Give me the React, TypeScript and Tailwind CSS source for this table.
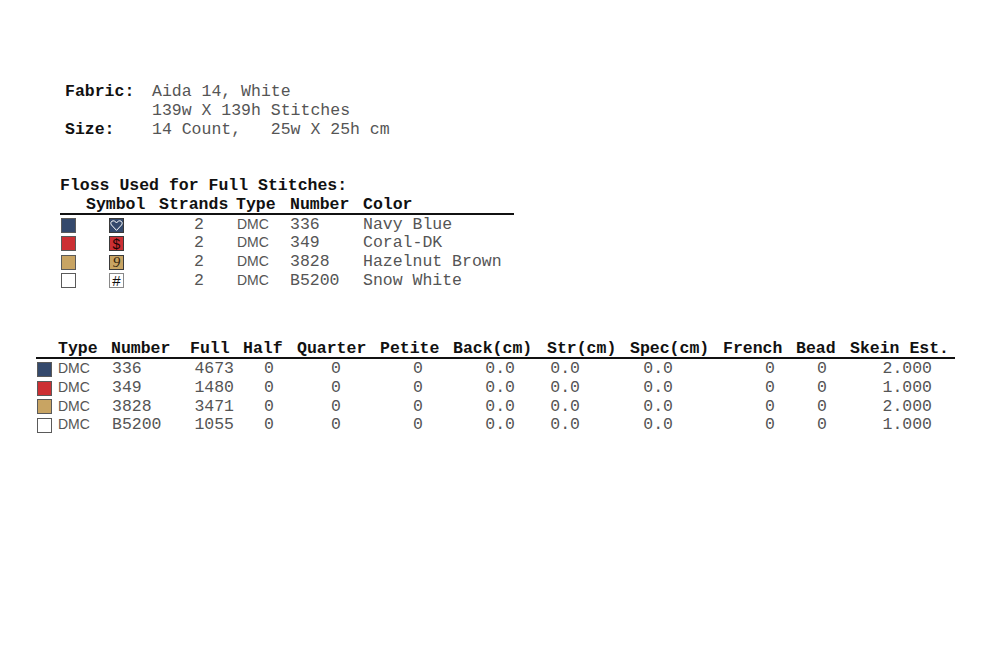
import React from "react";

const NAVY = "bg-[#34496c]";
const RED = "bg-[#cc2f33]";
const TAN = "bg-[#c8a463]";

type Floss = {
  swatch: string;
  symbol: React.ReactNode;
  number: string;
  name: string;
  full: string;
  skein: string;
};

const Heart = () => (
  <svg width="15" height="15" viewBox="0 0 15 15" className="block">
    <rect x="0.5" y="0.5" width="14" height="14" fill="#34496c" stroke="#3a3a3a" />
    <path
      d="M7.5 12.4 L2.4 6.9 C1.2 5.4 2 2.8 4.2 2.8 C5.8 2.8 6.8 3.9 7.5 5 C8.2 3.9 9.2 2.8 10.8 2.8 C13 2.8 13.8 5.4 12.6 6.9 Z"
      fill="none"
      stroke="#ffffff"
      strokeWidth="1"
    />
  </svg>
);

const SymBox = ({ bg, children, extra }: { bg: string; children: React.ReactNode; extra?: string }) => (
  <div
    className={`flex h-[15px] w-[15px] items-center justify-center overflow-hidden border ${extra ?? "border-[#3a3a3a]"} ${bg}`}
  >
    {children}
  </div>
);

const rows: Floss[] = [
  { swatch: NAVY, symbol: <Heart />, number: "336", name: "Navy Blue", full: "4673", skein: "2.000" },
  {
    swatch: RED,
    symbol: (
      <SymBox bg={RED}>
        <span className="font-['Liberation_Sans',sans-serif] text-[14px] leading-none text-[#1e0405]">$</span>
      </SymBox>
    ),
    number: "349",
    name: "Coral-DK",
    full: "1480",
    skein: "1.000",
  },
  {
    swatch: TAN,
    symbol: (
      <SymBox bg={TAN}>
        <span className="font-['Liberation_Serif',serif] text-[15px] italic leading-none text-[#2e200a]">9</span>
      </SymBox>
    ),
    number: "3828",
    name: "Hazelnut Brown",
    full: "3471",
    skein: "2.000",
  },
  {
    swatch: "bg-white",
    symbol: (
      <SymBox bg="bg-white" extra="border-[#888]">
        <span className="font-['Liberation_Sans',sans-serif] text-[15px] leading-none text-[#111]">#</span>
      </SymBox>
    ),
    number: "B5200",
    name: "Snow White",
    full: "1055",
    skein: "1.000",
  },
];

const Swatch = ({ color }: { color: string }) => (
  <div className={`h-[15px] w-[15px] border border-[#5a5a5a] ${color}`} />
);

export default function App() {
  return (
    <div className="h-[648px] w-[1005px] bg-white font-['Liberation_Mono',monospace] text-[16.5px] text-[#555]">
      {/* fabric info */}
      <div className="grid grid-cols-[87px_auto] pl-[65px] pt-[82px] leading-[19px]">
        <span className="font-bold text-[#111]">Fabric:</span>
        <span>Aida 14, White</span>
        <span />
        <span>139w X 139h Stitches</span>
        <span className="font-bold text-[#111]">Size:</span>
        <span className="whitespace-pre">14 Count,   25w X 25h cm</span>
      </div>

      {/* floss used */}
      <div className="ml-[60px] mt-[38px] w-[454px] leading-[18.67px]">
        <div className="font-bold text-[#111]">Floss Used for Full Stitches:</div>
        <div className="grid h-[19px] grid-cols-[26px_73px_77px_54px_73px_151px] border-b-2 border-[#111] font-bold text-[#111]">
          <span />
          <span>Symbol</span>
          <span>Strands</span>
          <span>Type</span>
          <span>Number</span>
          <span>Color</span>
        </div>
        {rows.map((r) => (
          <div
            key={r.number}
            className="grid h-[18.67px] grid-cols-[26px_73px_77px_54px_73px_151px] items-center"
          >
            <div className="pl-[1px]">
              <Swatch color={r.swatch} />
            </div>
            <div className="pl-[23px]">{r.symbol}</div>
            <span className="pr-[32px] text-right">2</span>
            <span className="pb-[2px] pl-[1px] font-['Liberation_Sans',sans-serif] text-[14px]">DMC</span>
            <span>{r.number}</span>
            <span>{r.name}</span>
          </div>
        ))}
      </div>

      {/* summary */}
      <div className="ml-[36px] mt-[51px] w-[919px] leading-[18.67px]">
        <div className="grid h-[19px] grid-cols-[22px_53px_79px_53px_54px_83px_73px_94px_83px_93px_73px_54px_105px] border-b-2 border-[#111] font-bold text-[#111]">
          <span />
          <span>Type</span>
          <span>Number</span>
          <span>Full</span>
          <span>Half</span>
          <span>Quarter</span>
          <span>Petite</span>
          <span>Back(cm)</span>
          <span>Str(cm)</span>
          <span>Spec(cm)</span>
          <span>French</span>
          <span>Bead</span>
          <span>Skein Est.</span>
        </div>
        {rows.map((r) => (
          <div
            key={r.number}
            className="grid h-[18.67px] grid-cols-[22px_53px_79px_53px_54px_83px_73px_94px_83px_93px_73px_54px_105px] items-center"
          >
            <div className="pl-[1px]">
              <Swatch color={r.swatch} />
            </div>
            <span className="pb-[2px] font-['Liberation_Sans',sans-serif] text-[14px]">DMC</span>
            <span className="pl-[1px]">{r.number}</span>
            <span className="pr-[9px] text-right">{r.full}</span>
            <span className="pr-[23px] text-right">0</span>
            <span className="pr-[39px] text-right">0</span>
            <span className="pr-[30px] text-right">0</span>
            <span className="pr-[32px] text-right">0.0</span>
            <span className="pr-[50px] text-right">0.0</span>
            <span className="pr-[50px] text-right">0.0</span>
            <span className="pr-[21px] text-right">0</span>
            <span className="pr-[23px] text-right">0</span>
            <span className="pr-[23px] text-right">{r.skein}</span>
          </div>
        ))}
      </div>
    </div>
  );
}
